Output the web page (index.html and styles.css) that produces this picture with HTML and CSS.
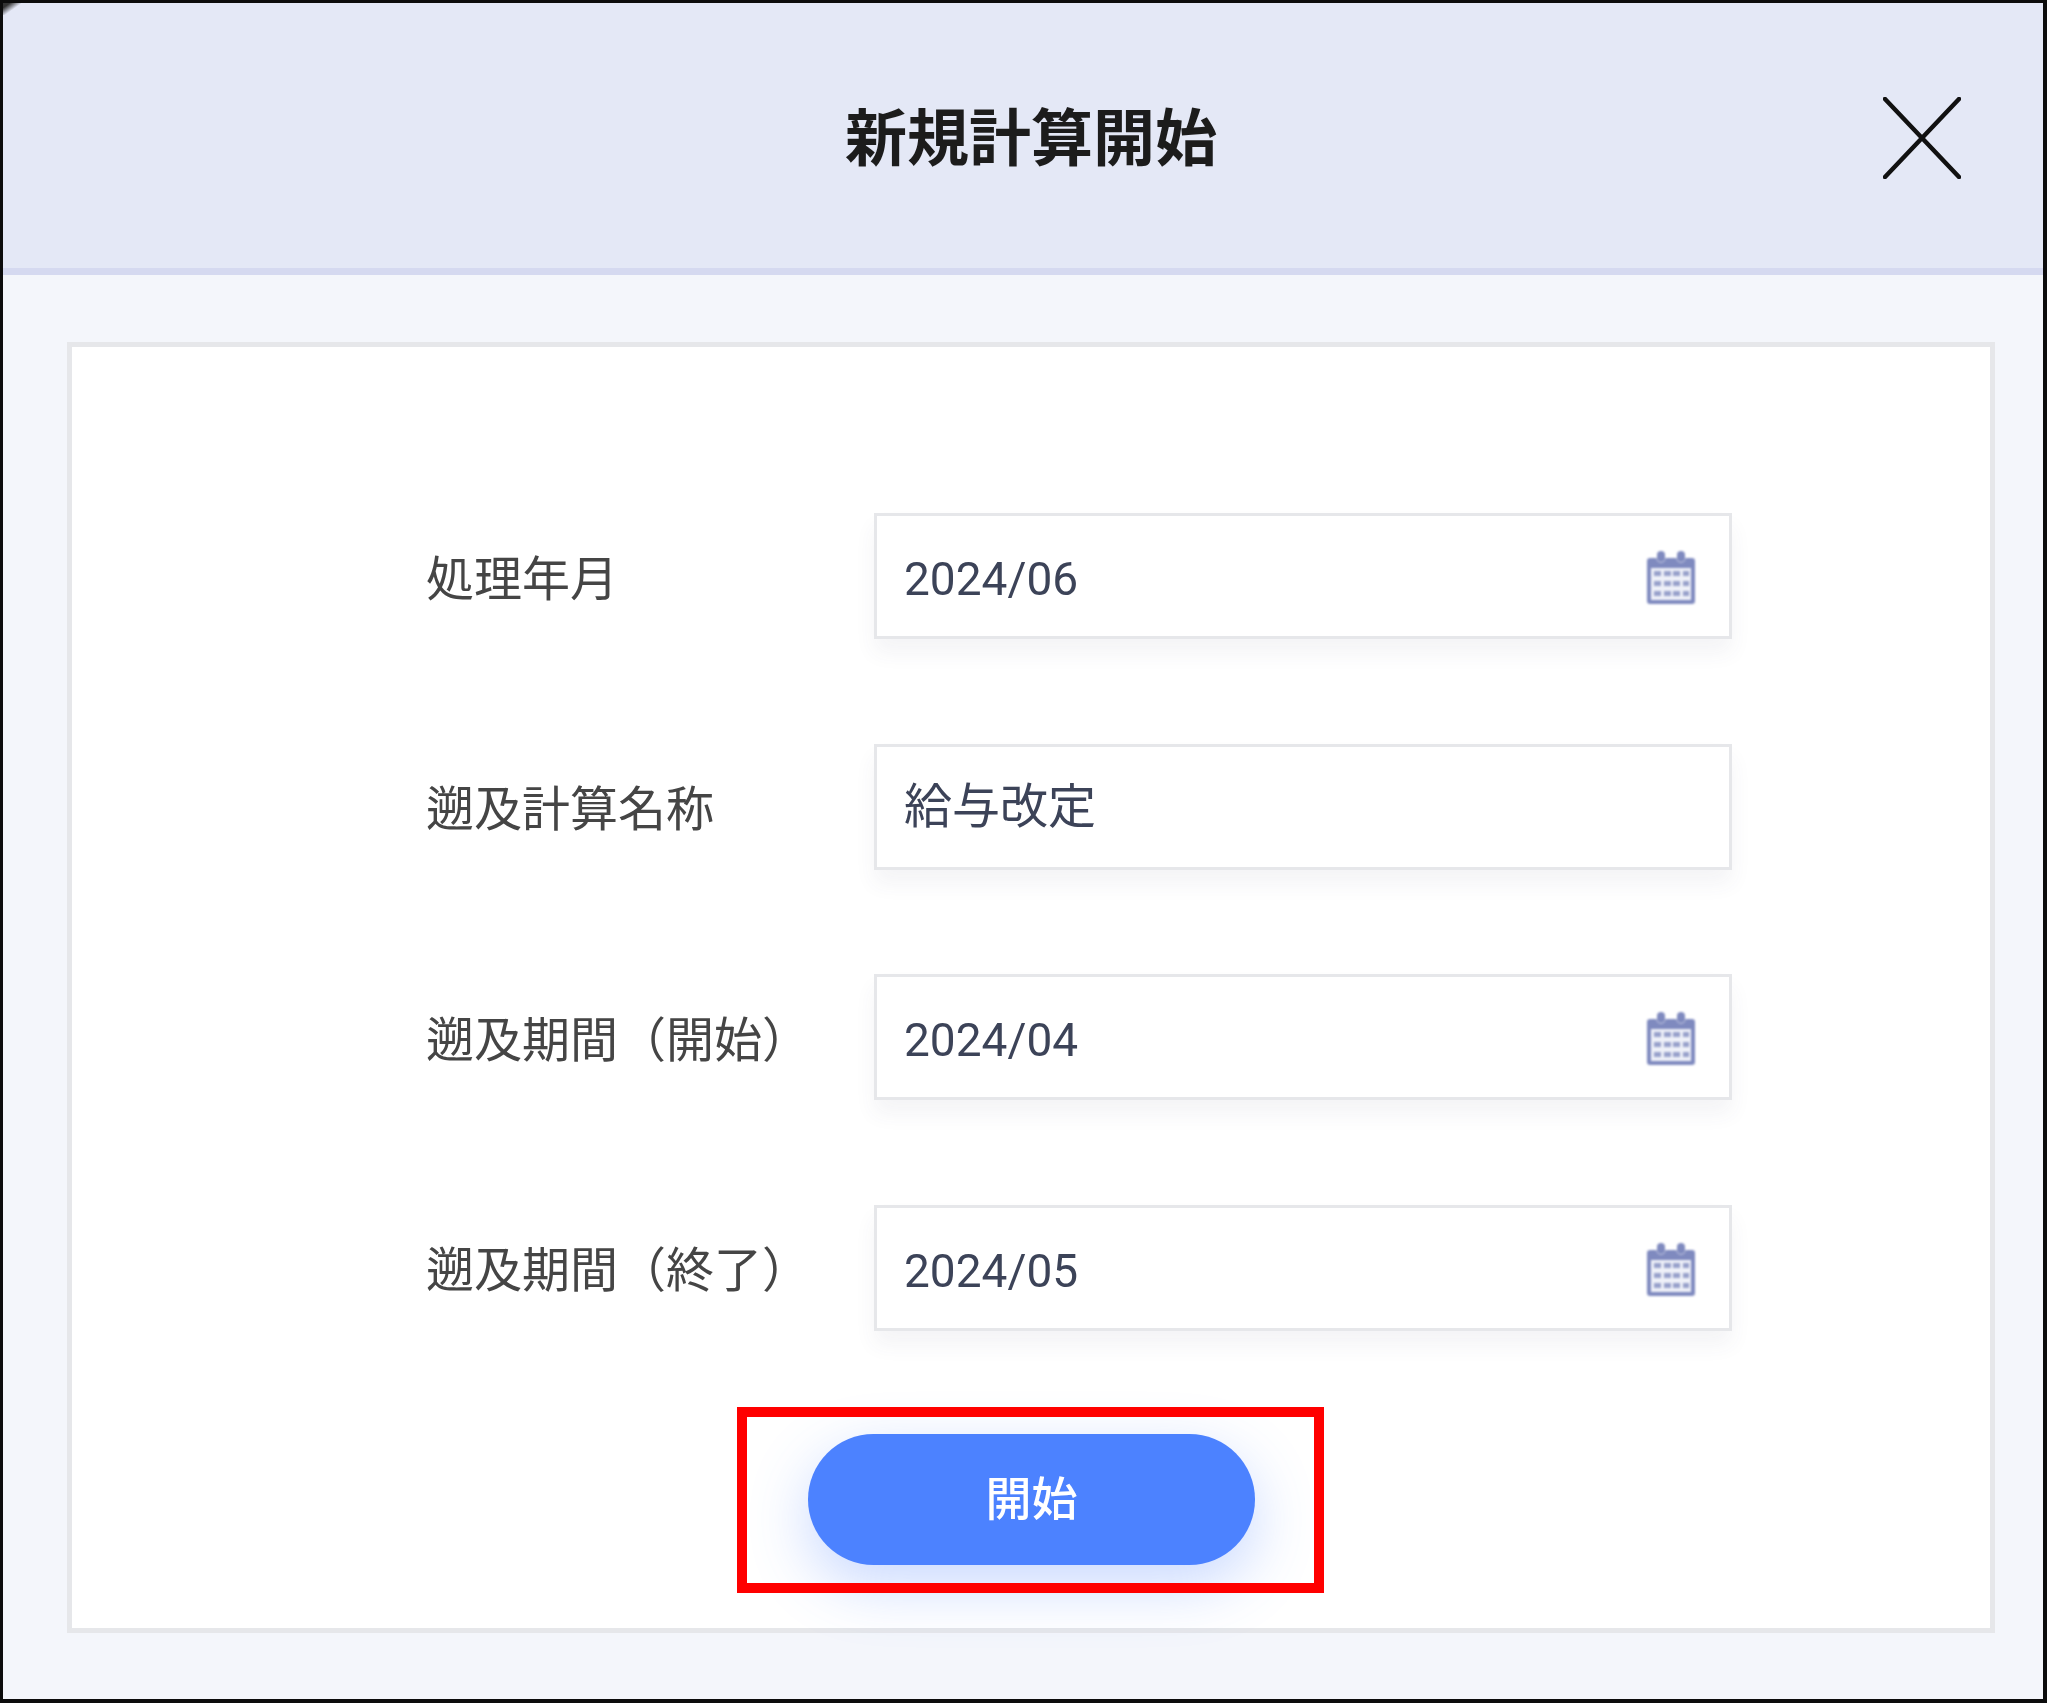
FILE: index.html
```html
<!DOCTYPE html>
<html lang="ja">
<head>
<meta charset="utf-8">
<title>新規計算開始</title>
<link rel="stylesheet" href="styles.css">
</head>
<body>
<svg class="defs" width="0" height="0" aria-hidden="true">
  <symbol id="cal" viewBox="0 0 48 54">
    <path d="M3 8h6.5a4.5 4.5 0 0 0 9 0h11a4.5 4.5 0 0 0 9 0H45a3 3 0 0 1 3 3v40a3 3 0 0 1-3 3H3a3 3 0 0 1-3-3V11a3 3 0 0 1 3-3z" fill="#7f8abf"/>
    <rect x="10" y="1" width="8" height="11" rx="4" fill="#7f8abf"/>
    <rect x="30" y="1" width="8" height="11" rx="4" fill="#7f8abf"/>
    <rect x="4" y="18" width="40" height="32" fill="#eef0f8"/>
    <g fill="#98a1cb">
      <rect x="7" y="21" width="7" height="5"/><rect x="17" y="21" width="7" height="5"/><rect x="26" y="21" width="7" height="5"/><rect x="36" y="21" width="6" height="5"/>
      <rect x="7" y="31" width="7" height="5"/><rect x="17" y="31" width="7" height="5"/><rect x="26" y="31" width="7" height="5"/><rect x="36" y="31" width="6" height="5"/>
      <rect x="7" y="41" width="7" height="5"/><rect x="17" y="41" width="7" height="5"/><rect x="26" y="41" width="7" height="5"/><rect x="36" y="41" width="6" height="5"/>
    </g>
  </symbol>
</svg>
<div class="dialog">
  <header class="head">
    <h1 class="title">新規計算開始</h1>
    <svg class="close" viewBox="0 0 78 82" aria-label="閉じる"><path d="M2 2 76 80M76 2 2 80" fill="none" stroke="#111" stroke-width="4.5" stroke-linecap="round"/></svg>
  </header>
  <main class="body">
    <section class="card">
      <div class="form">
        <div class="label">処理年月</div>
        <div class="field"><span class="val">2024/06</span><svg class="cal"><use href="#cal"/></svg></div>
        <div class="label">遡及計算名称</div>
        <div class="field field-name"><span class="val">給与改定</span></div>
        <div class="label">遡及期間（開始）</div>
        <div class="field"><span class="val">2024/04</span><svg class="cal"><use href="#cal"/></svg></div>
        <div class="label">遡及期間（終了）</div>
        <div class="field"><span class="val">2024/05</span><svg class="cal"><use href="#cal"/></svg></div>
      </div>
      <div class="actions">
        <div class="btn"><span class="btn-text">開始</span><div class="mark"></div></div>
      </div>
    </section>
  </main>
</div>
</body>
</html>
```
FILE: styles.css
```css
* { box-sizing: border-box; }
html, body { margin: 0; padding: 0; }
body { width: 2047px; height: 1703px; font-family: "Roboto", "Noto Sans CJK JP", sans-serif; overflow: hidden; background: #fff; }
.defs { position: absolute; }
.dialog { width: 2047px; height: 1703px; border: 3px solid #0c0c0c; border-bottom-width: 4px; border-right-width: 4px; display: flex; flex-direction: column; background: #f4f6fb; }
.head { height: 272px; flex: none; background: #e4e8f6; border-bottom: 7px solid #d5d9f0; display: flex; align-items: center; justify-content: center; position: relative; padding: 0 0 4px 16px; }
.head::before { content: ""; position: absolute; left: 0; top: 0; width: 18px; height: 12px; background: linear-gradient(145deg, #333 0, #333 20%, transparent 55%); }
.title { margin: 0; font-size: 62px; font-weight: 700; line-height: 1; color: #1c1c1c; font-family: "Noto Sans CJK JP", sans-serif; filter: blur(.7px); }
.close { position: absolute; left: 1880px; top: 94px; width: 78px; height: 82px; filter: blur(.6px); }
.body { flex: 1; padding: 67px 48px 66px 64px; display: flex; }
.card { flex: 1; background: #fff; border: 5px solid #e6e7ea; padding: 166px 0 0 354px; display: flex; flex-direction: column; }
.form { display: grid; grid-template-columns: 448px 858px; grid-auto-rows: 126px; row-gap: 104.5px; align-items: center; }
.label { font-size: 48px; line-height: 1; color: #454545; font-family: "Noto Sans CJK JP", sans-serif; filter: blur(.7px); white-space: nowrap; padding-bottom: 3px; }
.field { height: 126px; background: #fff; border: 3px solid #e6e7ea; box-shadow: 0 14px 20px rgba(60,70,110,.06); padding: 2px 34px 0 27px; display: flex; align-items: center; justify-content: space-between; font-size: 46px; color: #3c4358; }
.val { filter: blur(.7px); padding-top: 4px; }
.field-name { font-family: "Noto Sans CJK JP", sans-serif; font-size: 48px; padding-top: 0; padding-bottom: 10px; }
.field-name .val { padding-top: 0; }
.cal { width: 48px; height: 54px; flex: none; filter: blur(.8px); }
.actions { margin-top: 103px; padding-left: 382px; }
.btn { position: relative; width: 447px; height: 131px; border-radius: 66px; background: #4c82ff; color: #fff; font-size: 46px; font-weight: 500; font-family: "Noto Sans CJK JP", sans-serif; display: flex; align-items: center; justify-content: center; box-shadow: 0 20px 60px rgba(76,130,255,.3); }
.btn-text { filter: blur(.7px); padding-bottom: 8px; }
.mark { position: absolute; left: -71px; top: -27px; width: 587px; height: 186px; border: 10px solid #ff0000; }
```
